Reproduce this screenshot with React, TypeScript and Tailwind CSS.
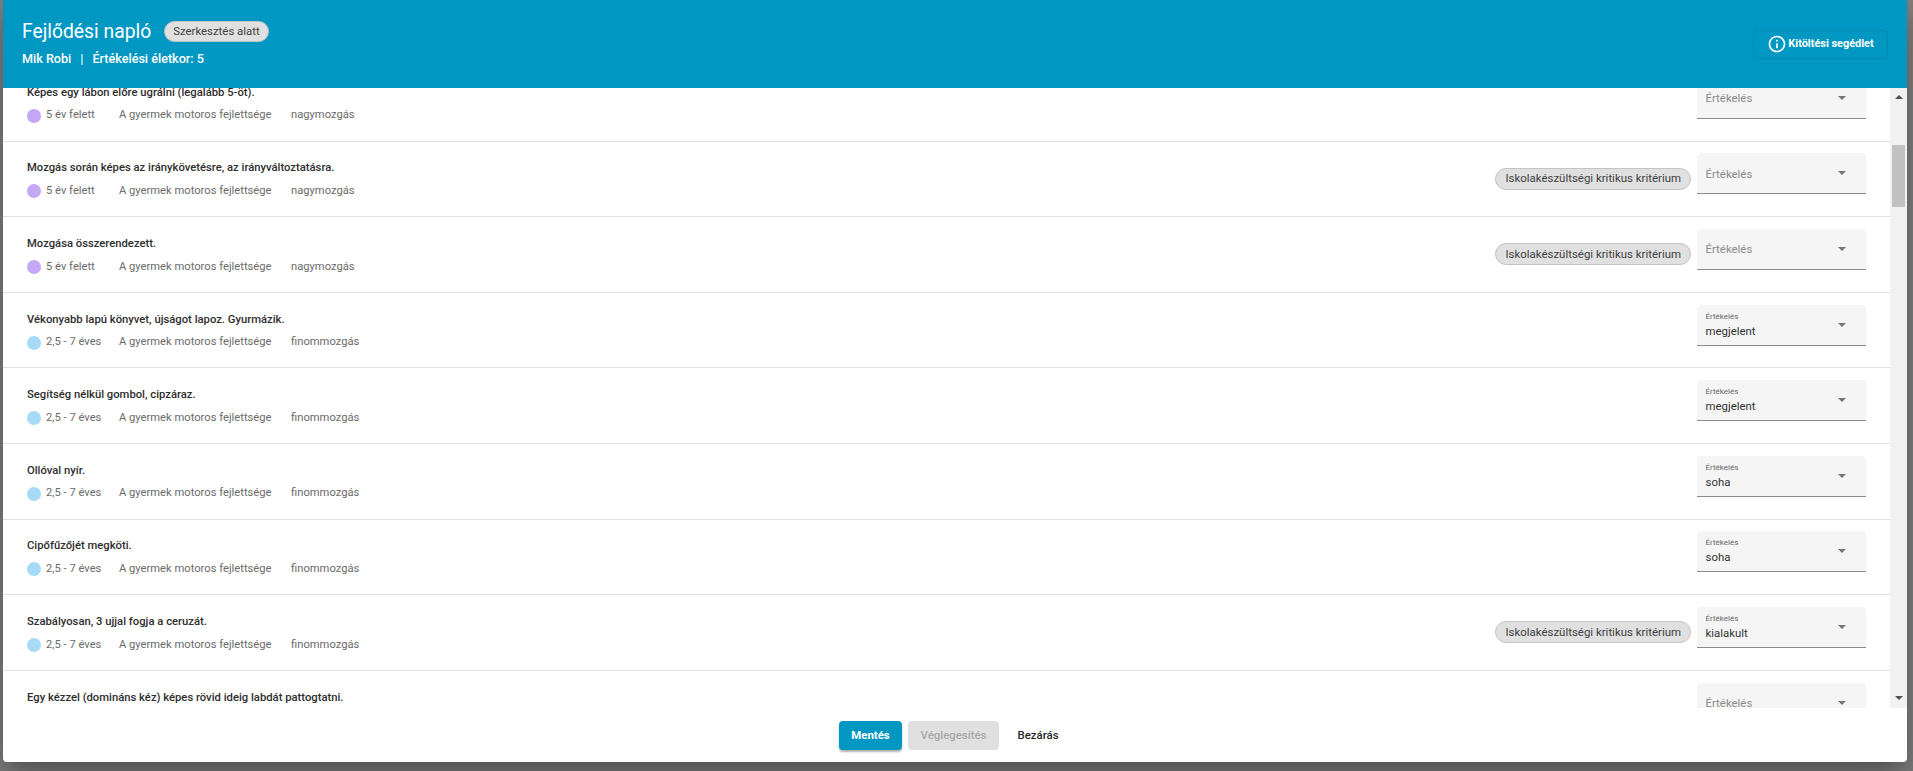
import { MdInfoOutline } from "react-icons/md";

type Row = {
  title: string;
  age: "old" | "young";
  area: string;
  critical?: boolean;
  value?: string;
};

const rows: Row[] = [
  { title: "Képes egy lábon előre ugrálni (legalább 5-öt).", age: "old", area: "nagymozgás" },
  { title: "Mozgás során képes az iránykövetésre, az irányváltoztatásra.", age: "old", area: "nagymozgás", critical: true },
  { title: "Mozgása összerendezett.", age: "old", area: "nagymozgás", critical: true },
  { title: "Vékonyabb lapú könyvet, újságot lapoz. Gyurmázik.", age: "young", area: "finommozgás", value: "megjelent" },
  { title: "Segítség nélkül gombol, cipzáraz.", age: "young", area: "finommozgás", value: "megjelent" },
  { title: "Ollóval nyír.", age: "young", area: "finommozgás", value: "soha" },
  { title: "Cipőfűzőjét megköti.", age: "young", area: "finommozgás", value: "soha" },
  { title: "Szabályosan, 3 ujjal fogja a ceruzát.", age: "young", area: "finommozgás", critical: true, value: "kialakult" },
  { title: "Egy kézzel (domináns kéz) képes rövid ideig labdát pattogtatni.", age: "young", area: "finommozgás" },
];

function Caret({ up = false, className = "" }: { up?: boolean; className?: string }) {
  return (
    <svg width="8" height="4" viewBox="0 0 8 4" className={className}>
      <path d={up ? "M0 4 L4 0 L8 4 Z" : "M0 0 L8 0 L4 4 Z"} fill="currentColor" />
    </svg>
  );
}

function Rating({ value }: { value?: string }) {
  return (
    <div className="mb-[10px] flex h-[41px] w-[169px] shrink-0 items-center justify-between rounded-t border-b border-[#8c8c8c] bg-[#f5f5f5] pl-[8.5px] pr-5">
      {value ? (
        <div className="flex flex-col">
          <span className="text-[8px] leading-[10px] text-[#666666]">Értékelés</span>
          <span className="mt-[2px] text-[11.4px] leading-[14px] text-[#333333]">{value}</span>
        </div>
      ) : (
        <span className="mt-[2px] text-[11.4px] text-[#8a8a8a]">Értékelés</span>
      )}
      <Caret className="text-[#757575]" />
    </div>
  );
}

function RowItem({ row }: { row: Row }) {
  return (
    <div className="flex h-[75.6px] shrink-0 items-center border-b border-[#e0e0e0] pl-[24px] pr-[24px]">
      <div className="mt-[2px] flex min-w-0 flex-1 flex-col gap-[9px]">
        <div className="text-[11.25px] font-medium leading-[14px] text-[#2e2e2e]">{row.title}</div>
        <div className="flex h-[14px] items-center text-[11.2px] text-[#6b6b6b]">
          <span className={`h-[14px] w-[14px] rounded-full ${row.age === "old" ? "bg-[#c4a8f5]" : "bg-[#a6daf7]"}`} />
          <span className="ml-[5px] w-[73px]">{row.age === "old" ? "5 év felett" : "2,5 - 7 éves"}</span>
          <span className="w-[172px]">A gyermek motoros fejlettsége</span>
          <span>{row.area}</span>
        </div>
      </div>
      {row.critical && (
        <span className="mr-[6px] flex h-[22px] items-center rounded-full border border-[#c4c4c4] bg-[#e0e0e0] px-[9px] text-[11.45px] text-[#424242]">
          Iskolakészültségi kritikus kritérium
        </span>
      )}
      <Rating value={row.value} />
    </div>
  );
}

export default function App() {
  return (
    <div className="h-[771px] w-full overflow-hidden bg-[#808080] pb-[9px] pl-[3px] pr-[6px] font-['Roboto',sans-serif]">
      <div className="flex h-full flex-col rounded-b bg-white shadow-[0_11px_15px_-7px_rgba(0,0,0,0.2),0_24px_38px_3px_rgba(0,0,0,0.14),0_9px_46px_8px_rgba(0,0,0,0.12)]">
        <header className="z-10 flex h-[88px] shrink-0 items-center justify-between bg-[#0098c3] pl-[19px] pr-[19px] text-white">
          <div className="-mt-[2px]">
            <div className="flex items-center gap-[13px]">
              <h1 className="text-[19.3px] leading-[26px]">Fejlődési napló</h1>
              <span className="-mt-[1px] flex h-[21px] items-center rounded-full border border-[#c4c4c4] bg-[#e0e0e0] px-2 text-[11.4px] text-[#424242]">
                Szerkesztés alatt
              </span>
            </div>
            <div className="mt-[6px] flex text-[12.6px] font-medium leading-4">
              <span>Mik Robi</span>
              <span className="mx-[9px]">|</span>
              <span>Értékelési életkor: 5</span>
            </div>
          </div>
          <button className="flex h-[29px] w-[135px] items-center justify-center gap-[1px] rounded border border-[#0088ae] text-[10.9px] font-bold">
            <MdInfoOutline className="text-[20px]" />
            Kitöltési segédlet
          </button>
        </header>
        <div className="flex h-[620px] shrink-0">
          <div className="min-w-0 flex-1 overflow-hidden">
            <div className="-mt-[22px]">
              {rows.map((row) => (
                <RowItem key={row.title} row={row} />
              ))}
            </div>
          </div>
          <div className="flex w-[17px] shrink-0 flex-col items-center bg-[#f1f1f1] text-[#505050]">
            <Caret up className="mt-[7px]" />
            <div className="mt-[46px] h-[62px] w-[13px] bg-[#c1c1c1]" />
            <Caret className="mb-[8px] mt-auto" />
          </div>
        </div>
        <footer className="flex flex-1 items-start justify-center pt-[13px] text-[11.4px] font-medium">
          <button className="h-[29px] w-[63px] rounded bg-[#0098c3] font-bold text-white shadow-[0_2px_2px_rgba(0,0,0,0.3)]">Mentés</button>
          <button className="ml-[6px] h-[29px] w-[91px] rounded bg-[#e0e0e0] text-[#a8a8a8]">Véglegesítés</button>
          <button className="ml-[6px] h-[29px] w-[66px] text-[#262626]">Bezárás</button>
        </footer>
      </div>
    </div>
  );
}
